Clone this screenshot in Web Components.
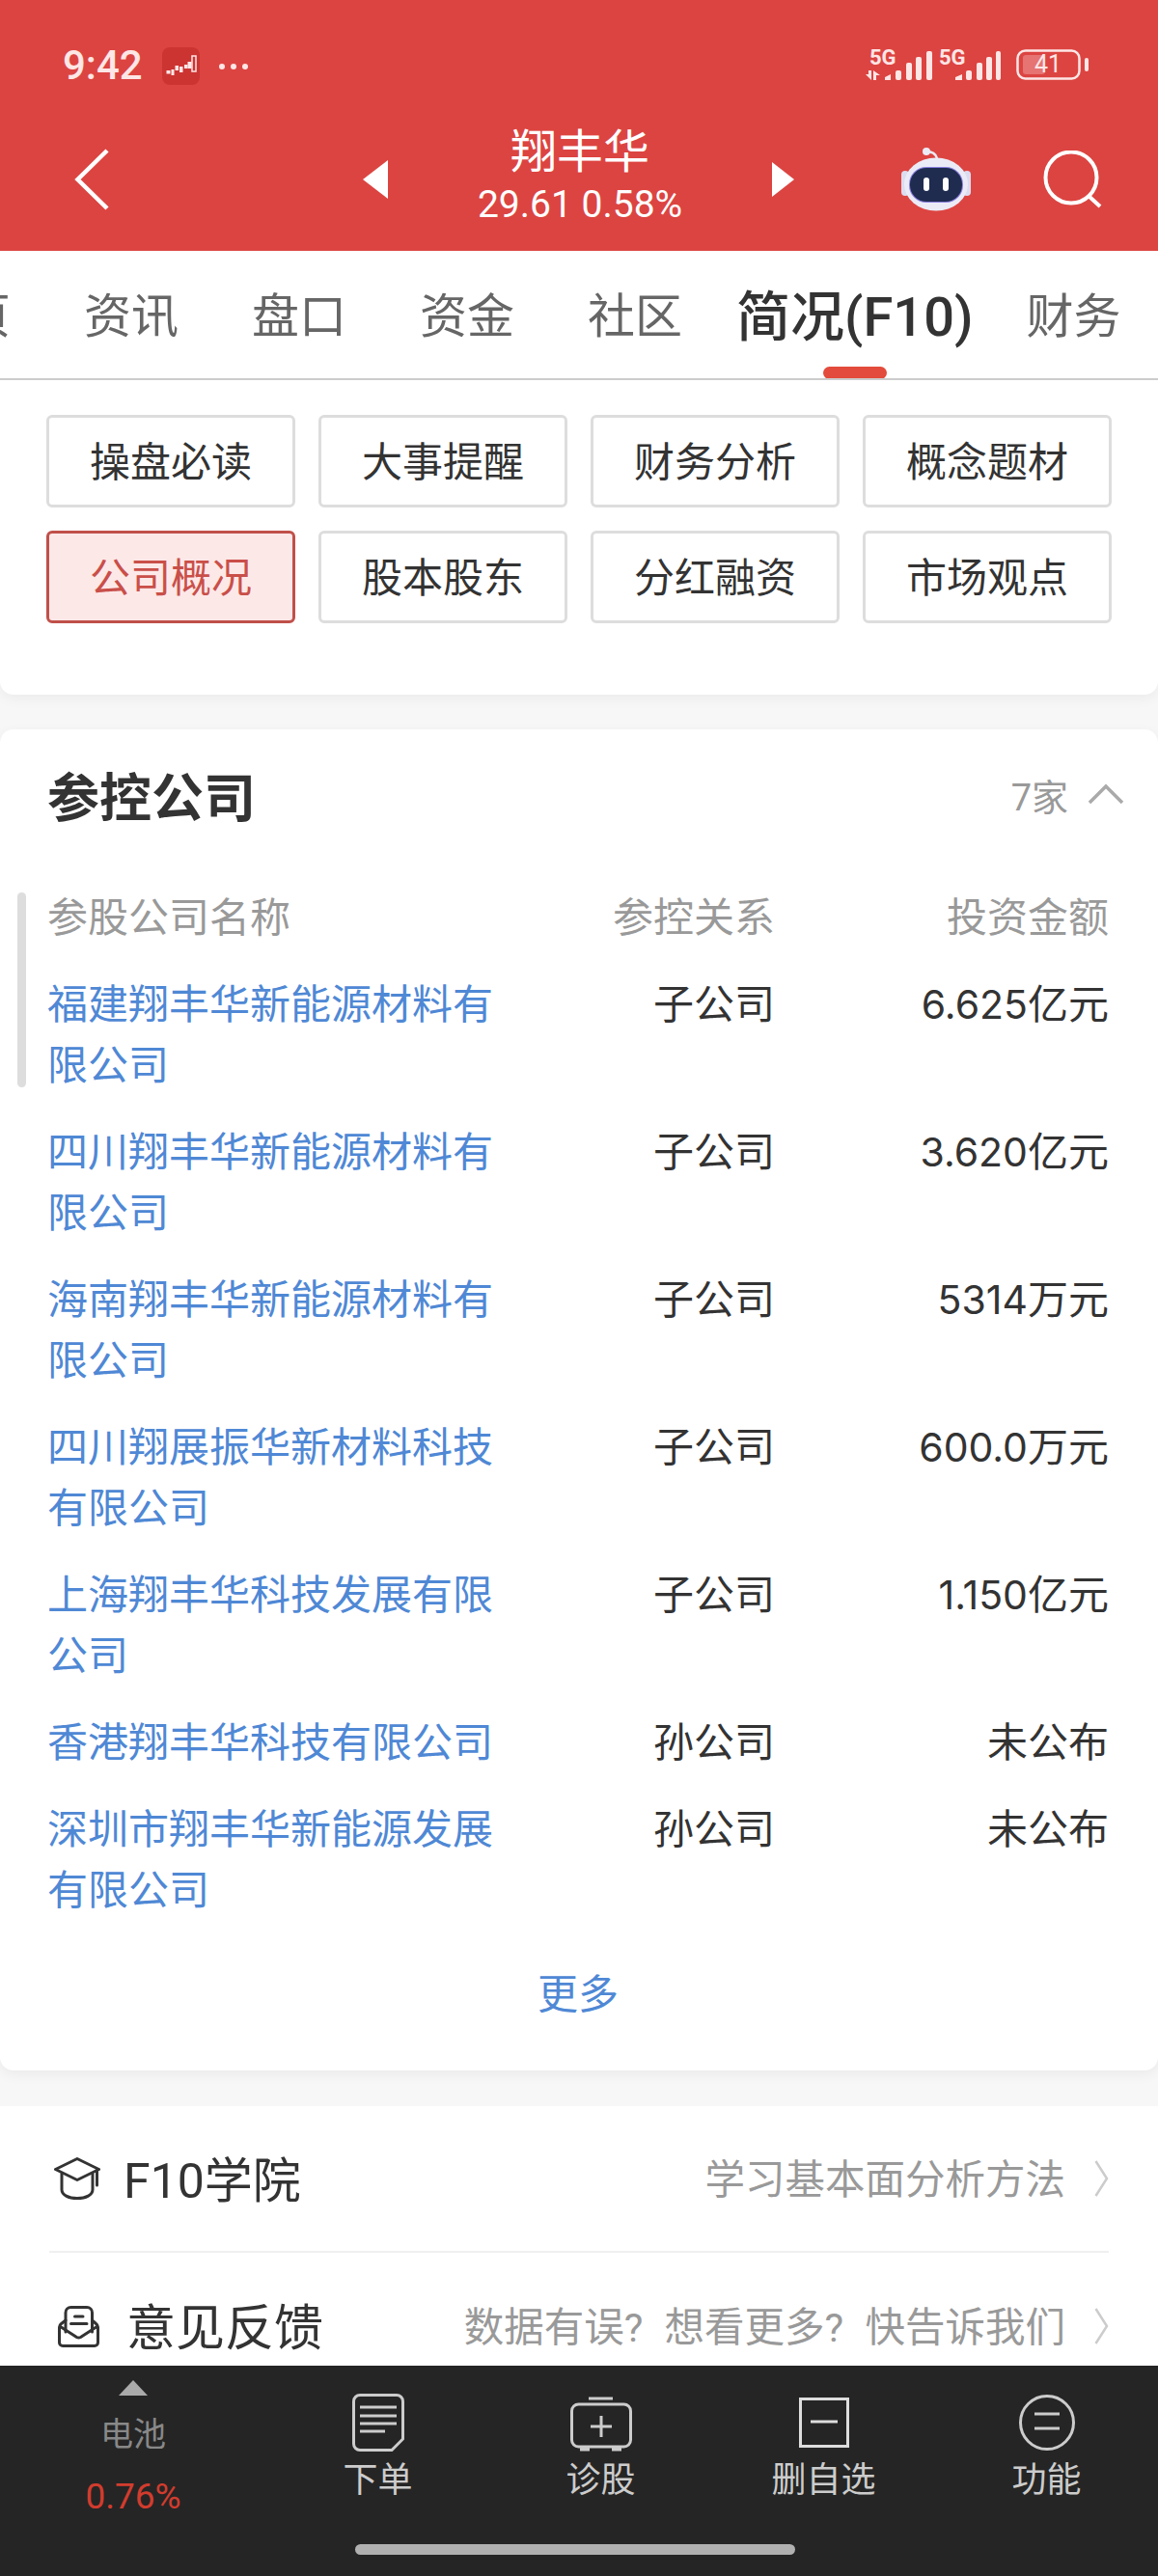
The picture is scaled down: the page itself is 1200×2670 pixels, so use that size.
<!DOCTYPE html>
<html lang="zh-CN">
<head>
<meta charset="utf-8">
<title>翔丰华</title>
<style>
  html, body { margin: 0; padding: 0; }
  body { font-family: Roboto, "Noto Sans CJK SC", sans-serif; background: #f7f7f7; }
  /* amounts are light dom, the digits in the reference are proportional */
  .n { font-family: Inter, sans-serif; font-size: 41px; }
</style>
</head>
<body>
<stock-page>
  <stock-header slot="top"></stock-header>
  <tab-bar slot="top">
    <span>首页</span><span>资讯</span><span>盘口</span><span>资金</span><span>社区</span>
    <span class="on">简况(F10)</span><span>财务</span>
  </tab-bar>

  <f10-menu>
    <f10-btn>操盘必读</f10-btn><f10-btn>大事提醒</f10-btn><f10-btn>财务分析</f10-btn><f10-btn>概念题材</f10-btn>
    <f10-btn active>公司概况</f10-btn><f10-btn>股本股东</f10-btn><f10-btn>分红融资</f10-btn><f10-btn>市场观点</f10-btn>
  </f10-menu>

  <holdings-card>
    <holding-row><span slot="rel">子公司</span><span slot="amount"><span class="n">6.625</span>亿元</span>福建翔丰华新能源材料有限公司</holding-row>
    <holding-row><span slot="rel">子公司</span><span slot="amount"><span class="n">3.620</span>亿元</span>四川翔丰华新能源材料有限公司</holding-row>
    <holding-row><span slot="rel">子公司</span><span slot="amount"><span class="n">5314</span>万元</span>海南翔丰华新能源材料有限公司</holding-row>
    <holding-row><span slot="rel">子公司</span><span slot="amount"><span class="n">600.0</span>万元</span>四川翔展振华新材料科技有限公司</holding-row>
    <holding-row><span slot="rel">子公司</span><span slot="amount"><span class="n">1.150</span>亿元</span>上海翔丰华科技发展有限公司</holding-row>
    <holding-row><span slot="rel">孙公司</span><span slot="amount">未公布</span>香港翔丰华科技有限公司</holding-row>
    <holding-row><span slot="rel">孙公司</span><span slot="amount">未公布</span>深圳市翔丰华新能源发展有限公司</holding-row>
  </holdings-card>

  <link-list>
    <link-row hint="学习基本面分析方法">
      <svg slot="icon" style="margin:0 24px 0 5px" width="48" height="44" viewBox="0 0 48 44" fill="none" stroke="#333" stroke-width="3" stroke-linejoin="round" stroke-linecap="round">
        <path d="M24 1.5 46.5 12.5 24 23.5 1.5 12.5Z"/>
        <path d="M8 17V33.5C8 39 15 42.5 24 42.5S40 39 40 33.5V17"/>
        <path d="M44.5 13V29"/>
      </svg>
      F10学院
    </link-row>
    <link-row hint="数据有误? 想看更多? 快告诉我们" style="--label-size:51px">
      <svg slot="icon" style="margin:0 28px 0 9px" width="43" height="43" viewBox="0 0 43 43" fill="none" stroke="#333" stroke-width="3" stroke-linejoin="round" stroke-linecap="round">
        <path d="M8 27V7a5.5 5.5 0 0 1 5.5-5.5H30A5.5 5.5 0 0 1 35.500 7V27"/>
        <path d="M8 15 3.500 18.500Q1.500 20 1.500 22V38a3.500 3.500 0 0 0 3.500 3.500H38a3.500 3.500 0 0 0 3.500-3.500V22Q41.500 20 39.500 18.500L35.500 15"/>
        <path d="M2.500 21.500 19.500 32.500Q21.500 33.500 23.500 32.500L40.500 21.500"/>
        <path d="M17.500 11H26M13.500 18.500H30"/>
      </svg>
      意见反馈
    </link-row>
  </link-list>

  <bottom-bar slot="bottom">
    <index-item></index-item>
    <bar-item label="下单">
      <svg width="54" height="60" viewBox="0 0 54 60" fill="none" stroke="#ccc" stroke-width="3">
        <path d="M8 1.500H46A6.500 6.500 0 0 1 52.500 8V47L41 58.500H8A6.500 6.500 0 0 1 1.500 52V8A6.500 6.500 0 0 1 8 1.500Z"/>
        <path d="M8 14H46M8 23H46M8 31H46M8 39H34"/>
      </svg>
    </bar-item>
    <bar-item label="诊股">
      <svg width="64" height="60" viewBox="0 0 64 60" fill="none" stroke="#ccc" stroke-width="3">
        <path d="M19 5H44"/>
        <rect x="1.500" y="11" width="61" height="44" rx="7"/>
        <path d="M32 23V45M21 34H43"/>
        <path d="M10 57H20M43 57H53" stroke-width="5"/>
      </svg>
    </bar-item>
    <bar-item label="删自选">
      <svg width="52" height="60" viewBox="0 0 52 60" fill="none" stroke="#ddd" stroke-width="3">
        <rect x="1.500" y="5.500" width="49" height="49"/>
        <path d="M12 29H40"/>
      </svg>
    </bar-item>
    <bar-item label="功能">
      <svg width="58" height="60" viewBox="0 0 58 60" fill="none" stroke="#ccc" stroke-width="3">
        <circle cx="29" cy="30" r="27.500"/>
        <path d="M16 21H42M16 36H42"/>
      </svg>
    </bar-item>
  </bottom-bar>
</stock-page>

<script>
const templateStockPage = document.createElement("template");
templateStockPage.innerHTML = `
  <style>
    :host { display: flex; flex-direction: column; height: 2670px; overflow: hidden; }
    .scroll { flex: 1; min-height: 0; overflow: hidden; }
  </style>
  <slot name="top"></slot>
  <div class="scroll"><slot></slot></div>
  <slot name="bottom"></slot>
`;
class StockPage extends HTMLElement {
  constructor() {
    super();
    this.attachShadow({ mode: "open" });
    this.shadowRoot.appendChild(templateStockPage.content.cloneNode(true));
  }
}
customElements.define("stock-page", StockPage);

const templateStockHeader = document.createElement("template");
templateStockHeader.innerHTML = `
  <style>
    :host { display: block; height: 260px; background: #dc4441; color: #fff; }
    .status { height: 122px; display: flex; align-items: flex-start; box-sizing: border-box; padding-top: 49px; }
    .time { margin-left: 65px; width: 103px; font-size: 42px; font-weight: 500; line-height: 38px; color: #fde6e6; }
    .app { display: block; }
    .dots { margin: 17px 0 0 20px; display: flex; gap: 6px; }
    .dots i { width: 6px; height: 6px; border-radius: 50%; background: #fde6e6; }
    .right { margin-left: auto; margin-right: 72px; display: flex; }
    .sig { display: grid; width: 70px; height: 35px; margin-top: 1px; margin-right: 6px; }
    .sig > * { grid-area: 1 / 1; }
    .sig span { font-size: 22px; line-height: 17px; font-weight: 700; color: #fde6e6; justify-self: start; align-self: start; margin: 1px 0 0 4px; }
    .sig.two span { margin-left: 0; }
    .bat { display: grid; width: 75px; height: 35px; margin: 2px 0 0 10px; }
    .bat > * { grid-area: 1 / 1; }
    .bat span { font-size: 25px; line-height: 31px; color: #fde6e6; justify-self: start; width: 66px; text-align: center; }
    .nav { height: 128px; display: flex; align-items: center; }
    .nav svg { display: block; flex: none; }
    .title { width: 398px; flex: none; text-align: center; }
    .name { font-size: 48px; line-height: 58px; margin-top: -6px; }
    .quote { font-size: 39px; line-height: 50px; }
  </style>
  <div class="status">
    <div class="time">9:42</div>
    <svg class="app" width="39" height="39" viewBox="0 0 39 39">
      <rect width="39" height="39" rx="8" fill="#cc3432"/>
      <g fill="#fde6e6">
        <rect x="4.500" y="24" width="4" height="3.500"/><rect x="9.500" y="23" width="3" height="6"/>
        <rect x="13.500" y="19" width="3.500" height="5"/><rect x="18" y="20" width="3.500" height="6"/>
        <rect x="23" y="18" width="3.500" height="4"/><rect x="26.500" y="15" width="4" height="7"/>
        <rect x="31" y="9" width="4" height="16" fill="none" stroke="#fde6e6" stroke-width="1.500"/>
      </g>
    </svg>
    <div class="dots"><i></i><i></i><i></i></div>
    <div class="right">
      <div class="sig">
        <svg width="70" height="35" viewBox="0 0 70 35" fill="#fde6e6">
          <path d="M0 27H6V33ZM3 27V23H6V27ZM8 33V23L15 28H11V33Z" />
          <path d="M20 33V30L26 27V33Z"/>
          <rect x="31" y="23" width="6" height="10" rx="2"/><rect x="42" y="15" width="6" height="18" rx="2"/>
          <rect x="52" y="9" width="6" height="24" rx="2"/><rect x="63" y="3" width="6" height="30" rx="2"/>
        </svg>
        <span>5G</span>
      </div>
      <div class="sig two" style="width:64px;margin-right:0">
        <svg width="64" height="35" viewBox="0 0 64 35" fill="#fde6e6">
          <path d="M17 33V30L24 27V33Z"/>
          <rect x="28" y="23" width="6" height="10" rx="2"/><rect x="39" y="15" width="6" height="18" rx="2"/>
          <rect x="49" y="9" width="6" height="24" rx="2"/><rect x="59" y="3" width="5" height="30" rx="2"/>
        </svg>
        <span>5G</span>
      </div>
      <div class="bat" style="margin-left:16px">
        <svg width="75" height="33" viewBox="0 0 75 33" fill="none">
          <rect x="1.500" y="1.500" width="64" height="29" rx="8" stroke="#fde6e6" stroke-width="2.500"/>
          <rect x="7" y="6" width="23" height="20" rx="3" fill="#fde6e6" fill-opacity=".3"/>
          <rect x="71" y="9" width="4" height="14" rx="2" fill="#fde6e6"/>
        </svg>
        <span>41</span>
      </div>
    </div>
  </div>
  <div class="nav">
    <svg style="margin-left:77px" width="36" height="64" viewBox="0 0 36 64" fill="none" stroke="#fff" stroke-width="4.500"><path d="M34 2 3.500 32 34 62"/></svg>
    <svg style="margin-left:263px" width="26" height="40" viewBox="0 0 26 40" fill="#fff"><path d="M26 0V40L0 20Z"/></svg>
    <div class="title">
      <div class="name">翔丰华</div>
      <div class="quote">29.61 0.58%</div>
    </div>
    <svg width="23" height="36" viewBox="0 0 23 36" fill="#fff"><path d="M0 0V36L23 18Z"/></svg>
    <svg style="margin-left:111px" width="72" height="66" viewBox="0 0 72 66">
      <path d="M26 4Q35 4 37 11" fill="none" stroke="#eceaf6" stroke-width="2.500"/>
      <circle cx="26" cy="4" r="4" fill="#eceaf6"/>
      <rect x="0" y="24" width="8" height="26" rx="4" fill="#dcdcf0"/>
      <rect x="64" y="24" width="8" height="26" rx="4" fill="#dcdcf0"/>
      <ellipse cx="36" cy="38" rx="33" ry="27.500" fill="#ebebf7"/>
      <rect x="8" y="20" width="56" height="37" rx="18" fill="#8a7ee0"/>
      <rect x="9" y="21" width="54" height="35" rx="17" fill="#1f2c50"/>
      <rect x="23" y="31" width="6" height="14" rx="3" fill="#fff"/>
      <rect x="43" y="31" width="6" height="14" rx="3" fill="#fff"/>
    </svg>
    <svg style="margin-left:75px" width="62" height="60" viewBox="0 0 62 60" fill="none" stroke="#fff" stroke-width="4">
      <circle cx="29" cy="28" r="26.500"/><path d="M47 47 59 58"/>
    </svg>
  </div>
`;
class StockHeader extends HTMLElement {
  constructor() {
    super();
    this.attachShadow({ mode: "open" });
    this.shadowRoot.appendChild(templateStockHeader.content.cloneNode(true));
  }
}
customElements.define("stock-header", StockHeader);

const templateTabBar = document.createElement("template");
templateTabBar.innerHTML = `
  <style>
    :host { display: block; position: relative; height: 134px; background: #fff; box-sizing: border-box; border-bottom: 2px solid #ccc; overflow: hidden; }
    .row { display: flex; gap: 76px; margin-left: -87px; height: 126px; align-items: center; width: max-content; font-size: 49px; color: #666; }
    ::slotted(span) { white-space: nowrap; }
    ::slotted(.on) { font-size: 56px; font-weight: 500; color: #333; margin: 0 -21px 0 -20px; }
    .mark { position: absolute; left: 853px; top: 120px; width: 66px; height: 13px; border-radius: 7px; background: #e34b3c; }
  </style>
  <div class="row"><slot></slot></div>
  <div class="mark"></div>
`;
class TabBar extends HTMLElement {
  constructor() {
    super();
    this.attachShadow({ mode: "open" });
    this.shadowRoot.appendChild(templateTabBar.content.cloneNode(true));
  }
}
customElements.define("tab-bar", TabBar);

const templateF10Menu = document.createElement("template");
templateF10Menu.innerHTML = `
  <style>
    :host { display: grid; grid-template-columns: repeat(4, 1fr); gap: 24px; padding: 36px 48px 74px; background: #fff; border-radius: 0 0 14px 14px; box-shadow: 0 4px 14px rgba(0,0,0,.05); position: relative; }
  </style>
  <slot></slot>
`;
class F10Menu extends HTMLElement {
  constructor() {
    super();
    this.attachShadow({ mode: "open" });
    this.shadowRoot.appendChild(templateF10Menu.content.cloneNode(true));
  }
}
customElements.define("f10-menu", F10Menu);

const templateF10Btn = document.createElement("template");
templateF10Btn.innerHTML = `
  <style>
    :host { display: flex; align-items: center; justify-content: center; height: 96px; box-sizing: border-box; border: 3px solid #ddd; border-radius: 6px; padding-bottom: 5px; font-size: 42px; color: #333; }
    :host([active]) { border-color: #c0504a; background: #fde8e8; color: #c94f49; }
  </style>
  <slot></slot>
`;
class F10Btn extends HTMLElement {
  constructor() {
    super();
    this.attachShadow({ mode: "open" });
    this.shadowRoot.appendChild(templateF10Btn.content.cloneNode(true));
  }
}
customElements.define("f10-btn", F10Btn);

const templateHoldingsCard = document.createElement("template");
templateHoldingsCard.innerHTML = `
  <style>
    :host { display: block; position: relative; margin-top: 36px; padding: 0 51px 47px 49px; background: #fff; border-radius: 14px; box-shadow: 0 4px 14px rgba(0,0,0,.06); }
    .head { height: 140px; box-sizing: border-box; padding-bottom: 6px; display: flex; align-items: center; }
    h2 { margin: 0; font-size: 54px; font-weight: 700; color: #333; }
    .count { margin-left: auto; font-size: 38px; color: #999; }
    .head svg { margin: 0 -16px 0 20px; }
    .cols { margin-top: 24px; padding-bottom: 27px; display: grid; grid-template-columns: 470px 284px 346px; font-size: 42px; line-height: 63px; color: #999; }
    .cols span + span { text-align: right; }
    .more { margin-top: 18px; text-align: center; font-size: 42px; line-height: 63px; color: #4f88d5; }
    .thumb { position: absolute; left: 18px; top: 169px; width: 9px; height: 202px; border-radius: 5px; background: #ddd; }
  </style>
  <div class="head">
    <h2>参控公司</h2>
    <span class="count">7家</span>
    <svg width="38" height="22" viewBox="0 0 38 22" fill="none" stroke="#aaa" stroke-width="3.500"><path d="M2 20 19 3 36 20"/></svg>
  </div>
  <div class="cols"><span>参股公司名称</span><span>参控关系</span><span>投资金额</span></div>
  <slot></slot>
  <div class="more">更多</div>
  <div class="thumb"></div>
`;
class HoldingsCard extends HTMLElement {
  constructor() {
    super();
    this.attachShadow({ mode: "open" });
    this.shadowRoot.appendChild(templateHoldingsCard.content.cloneNode(true));
  }
}
customElements.define("holdings-card", HoldingsCard);

const templateHoldingRow = document.createElement("template");
templateHoldingRow.innerHTML = `
  <style>
    :host { display: grid; grid-template-columns: 470px 284px 346px; padding-bottom: 27px; font-size: 42px; line-height: 63px; color: #333; }
    .name { color: #4f88d5; }
    .num { text-align: right; }
  </style>
  <div class="name"><slot></slot></div>
  <div class="num"><slot name="rel"></slot></div>
  <div class="num"><slot name="amount"></slot></div>
`;
class HoldingRow extends HTMLElement {
  constructor() {
    super();
    this.attachShadow({ mode: "open" });
    this.shadowRoot.appendChild(templateHoldingRow.content.cloneNode(true));
  }
}
customElements.define("holding-row", HoldingRow);

const templateLinkList = document.createElement("template");
templateLinkList.innerHTML = `
  <style>
    :host { display: block; margin-top: 37px; padding: 0 51px; background: #fff; }
  </style>
  <slot></slot>
`;
class LinkList extends HTMLElement {
  constructor() {
    super();
    this.attachShadow({ mode: "open" });
    this.shadowRoot.appendChild(templateLinkList.content.cloneNode(true));
  }
}
customElements.define("link-list", LinkList);

const templateLinkRow = document.createElement("template");
templateLinkRow.innerHTML = `
  <style>
    :host { display: flex; align-items: center; height: 152px; box-sizing: border-box; border-bottom: 2px solid #f0f0f0; font-size: var(--label-size, 50px); color: #333; }
    :host(:last-child) { border-bottom: 0; }
    .txt { margin-bottom: 5px; }
    .hint { margin-left: auto; margin-bottom: 5px; font-size: 41.5px; color: #999; word-spacing: 12px; }
    .go { margin-left: 30px; display: block; }
  </style>
  <slot name="icon"></slot>
  <div class="txt"><slot></slot></div>
  <span class="hint"></span>
  <svg class="go" width="15" height="38" viewBox="0 0 15 38" fill="none" stroke="#ccc" stroke-width="2.500"><path d="M1.500 1 13 19 1.500 37"/></svg>
`;
class LinkRow extends HTMLElement {
  constructor() {
    super();
    this.attachShadow({ mode: "open" });
    this.shadowRoot.appendChild(templateLinkRow.content.cloneNode(true));
    this.shadowRoot.querySelector(".hint").textContent = this.getAttribute("hint");
  }
}
customElements.define("link-row", LinkRow);

const templateBottomBar = document.createElement("template");
templateBottomBar.innerHTML = `
  <style>
    :host { display: block; height: 218px; background: #252525; }
    .items { height: 185px; display: grid; grid-template-columns: 276px repeat(4, 231px); }
    .home { width: 456px; height: 11px; margin-left: 368px; border-radius: 6px; background: #b0b0b0; }
  </style>
  <div class="items"><slot></slot></div>
  <div class="home"></div>
`;
class BottomBar extends HTMLElement {
  constructor() {
    super();
    this.attachShadow({ mode: "open" });
    this.shadowRoot.appendChild(templateBottomBar.content.cloneNode(true));
  }
}
customElements.define("bottom-bar", BottomBar);

const templateBarItem = document.createElement("template");
templateBarItem.innerHTML = `
  <style>
    :host { display: flex; flex-direction: column; align-items: center; padding-top: 29px; font-size: 36px; color: #ccc; }
    ::slotted(svg) { display: block; }
    .label { margin-top: 4px; line-height: 52px; }
  </style>
  <slot></slot>
  <div class="label"></div>
`;
class BarItem extends HTMLElement {
  constructor() {
    super();
    this.attachShadow({ mode: "open" });
    this.shadowRoot.appendChild(templateBarItem.content.cloneNode(true));
    this.shadowRoot.querySelector(".label").textContent = this.getAttribute("label");
  }
}
customElements.define("bar-item", BarItem);

const templateIndexItem = document.createElement("template");
templateIndexItem.innerHTML = `
  <style>
    :host { display: flex; flex-direction: column; align-items: center; padding-top: 15px; }
    svg { display: block; }
    .name { margin-top: 15px; font-size: 34px; line-height: 50px; color: #888; }
    .pct { margin-top: 15px; font-size: 37px; line-height: 50px; color: #d13c2e; }
  </style>
  <svg width="30" height="16" viewBox="0 0 30 16" fill="#aaa"><path d="M15 0 30 16H0Z"/></svg>
  <div class="name">电池</div>
  <div class="pct">0.76%</div>
`;
class IndexItem extends HTMLElement {
  constructor() {
    super();
    this.attachShadow({ mode: "open" });
    this.shadowRoot.appendChild(templateIndexItem.content.cloneNode(true));
  }
}
customElements.define("index-item", IndexItem);
</script>
</body>
</html>
